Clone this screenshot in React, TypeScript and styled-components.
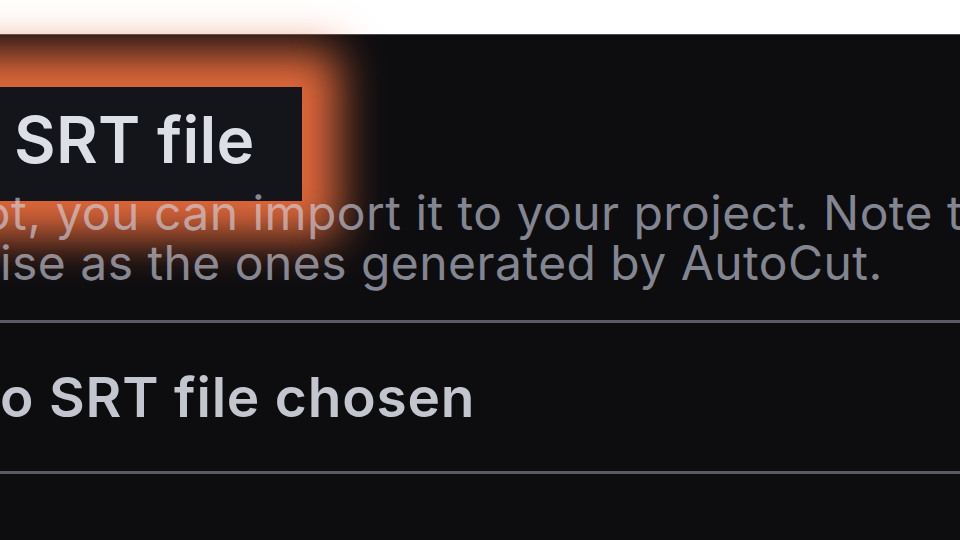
import styled, { createGlobalStyle } from 'styled-components';

const GlobalStyle = createGlobalStyle`
  html, body {
    margin: 0;
    padding: 0;
    background: #ffffff;
    overflow: hidden;
  }
  body {
    font-family: Inter, 'Noto Sans', sans-serif;
  }
`;

const Page = styled.div`
  width: 960px;
  height: 540px;
  padding-top: 34px;
  box-sizing: border-box;
`;

// stacking context so the spotlight sits above the panel but under the text
const Panel = styled.section`
  position: relative;
  z-index: 0;
  height: 506px;
  display: flex;
  flex-direction: column;
  background: #0d0d10;
  border-top: 1px solid #48484d;
`;

const Title = styled.h2`
  position: relative;
  width: 302px;
  box-sizing: border-box;
  margin: 52px 0 0;
  padding: 5px 0 0 14px;
  font-size: 64px;
  font-weight: 600;
  line-height: 96px;
  letter-spacing: 0.3px;
  color: #dcdfe6;
  white-space: nowrap;

  &::before {
    content: '';
    position: absolute;
    z-index: -1;
    top: 0;
    right: 0;
    bottom: -13px;
    left: -400px;
    background: #14141b;
    box-shadow: 0 0 42px 36px #e2693b;
  }
`;

// part of a line that runs off the left edge of the panel
const Lead = styled.span`
  display: inline-flex;
  justify-content: flex-end;
  width: 0;
  white-space: nowrap;
`;

const Description = styled.p`
  margin: 0 0 32px;
  font-size: 48px;
  font-weight: 400;
  line-height: 50px;
  letter-spacing: 0.45px;
  color: rgba(212, 217, 232, 0.6);
`;

const Line = styled.span<{ $indent: number }>`
  display: block;
  padding-left: ${(p) => p.$indent}px;
  white-space: nowrap;
`;

const FileRow = styled.div`
  height: 148px;
  display: flex;
  align-items: center;
  border-top: 3px solid #5a5b65;
  border-bottom: 3px solid #5a5b65;
`;

const FileName = styled.span`
  font-size: 55px;
  font-weight: 600;
  letter-spacing: 0.8px;
  color: #c3c6ce;
  white-space: nowrap;
`;

export default function App() {
  return (
    <Page>
      <GlobalStyle />
      <Panel>
        <Title>
          <Lead>Import&nbsp;</Lead>
          SRT file
        </Title>
        <Description>
          <Line $indent={11}>
            <Lead>If you already have an SRT file for your sho</Lead>
            t, you can import it to your project. Note that imported subtitles may not be as
          </Line>
          <Line $indent={0}>
            <Lead>prec</Lead>
            ise as the ones generated by AutoCut.
          </Line>
        </Description>
        <FileRow>
          <FileName>
            <Lead>N</Lead>
            o SRT file chosen
          </FileName>
        </FileRow>
      </Panel>
    </Page>
  );
}
